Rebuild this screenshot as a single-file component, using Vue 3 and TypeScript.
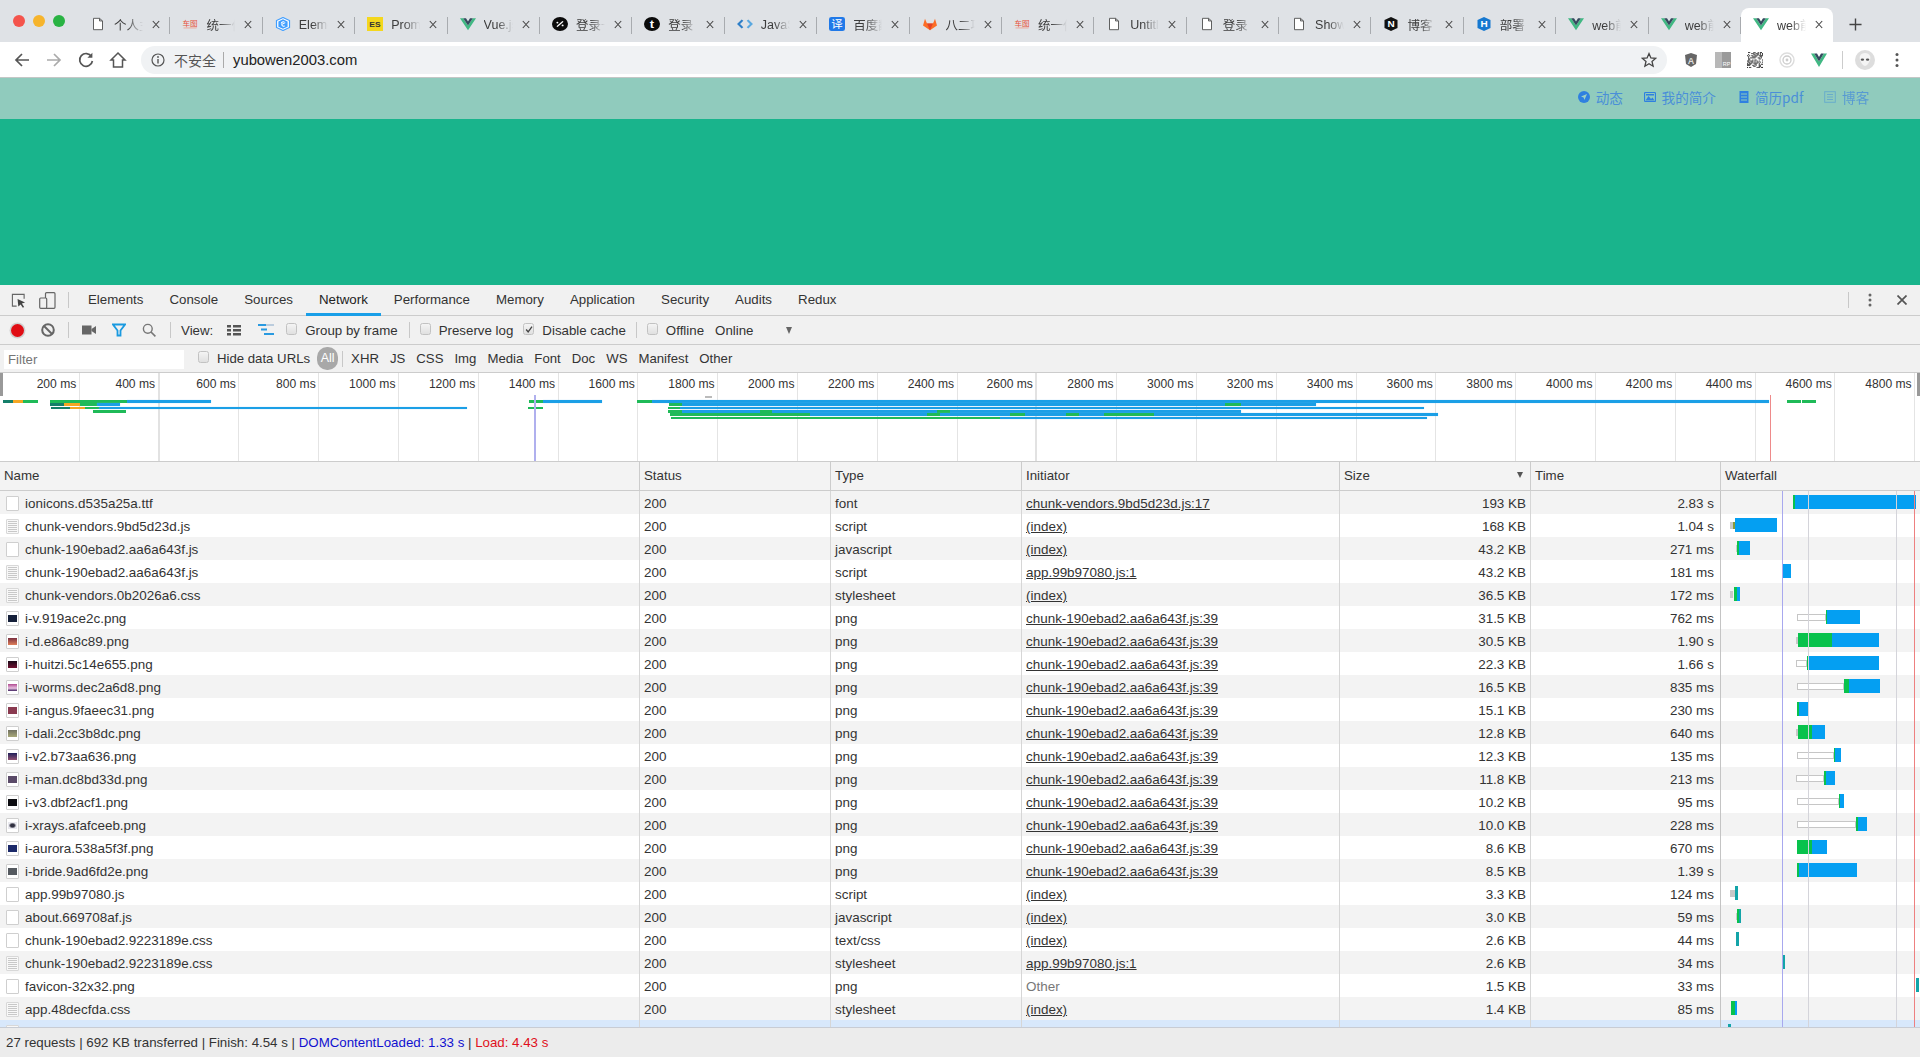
<script setup lang="ts">
type Seg = [string, number, number]
interface Tab { fav: string; text: string; active?: boolean }
interface Row {
  name: string; type: string; init: string; size: string; time: string
  icon: string; thumb?: string; bars: Seg[]
}

const tabs: Tab[] = [
  { fav: 'file', text: '个人主页' }, { fav: 'red', text: '统一任务' }, { fav: 'el', text: 'Element' },
  { fav: 'es', text: 'Promise' }, { fav: 'vue', text: 'Vue.js' }, { fav: 'noon', text: '登录一下' },
  { fav: 't', text: '登录  ' }, { fav: 'js', text: 'JavaScript' }, { fav: 'fy', text: '百度翻译' },
  { fav: 'gl', text: '八二项目' }, { fav: 'red', text: '统一任务' }, { fav: 'file', text: 'Untitled' },
  { fav: 'file', text: '登录  ' }, { fav: 'file', text: 'Show' }, { fav: 'n', text: '博客  ' },
  { fav: 'h', text: '部署  ' }, { fav: 'vue', text: 'web前端' }, { fav: 'vue', text: 'web前端' },
  { fav: 'vue', text: 'web前端', active: true },
]

const devTabs = ['Elements', 'Console', 'Sources', 'Network', 'Performance', 'Memory', 'Application', 'Security', 'Audits', 'Redux']
const filters = ['XHR', 'JS', 'CSS', 'Img', 'Media', 'Font', 'Doc', 'WS', 'Manifest', 'Other']
const ticks = Array.from({ length: 24 }, (_, i) => `${(i + 1) * 200} ms`)

const ovBars: [number, string, number, number][] = [
  [400, 'g', 23, 38], [400, 'd', 2.5, 12.5], [400, 'o', 12.5, 23],
  [400, 'b', 127, 211], [400, 'g', 49.5, 127], [400, 'b', 543, 602], [400, 'g', 529, 543],
  [400, 'b', 652, 1769], [400, 'g', 637, 652], [400, 'g', 1787, 1801], [400, 'g', 1802, 1816],
  [403.3, 'd', 49.5, 64], [403.3, 'o', 64, 80], [403.3, 'g', 80, 97], [403.3, 'b', 97, 120],
  [403.3, 'b', 682, 1316], [403.3, 'g', 669, 682], [403.3, 'g', 1225, 1241],
  [406.7, 'd', 51, 70], [406.7, 'o', 70, 85], [406.7, 'g', 85, 99], [406.7, 'b', 99, 467],
  [406.7, 'g', 528, 543], [406.7, 'b', 680, 1424], [406.7, 'g', 668, 680],
  [410, 'g', 93, 126], [410, 'b', 682, 1241], [410, 'g', 668, 682], [410, 'g', 760, 772], [410, 'g', 937, 950],
  [413.3, 'b', 810, 1438], [413.3, 'g', 670, 810], [413.3, 'g', 927, 940], [413.3, 'g', 1010, 1025],
  [413.3, 'g', 1066, 1079], [413.3, 'g', 1104, 1154],
  [416.7, 'b', 1000, 1427], [416.7, 'g', 671, 1000],
]

const c = 'chunk-190ebad2.aa6a643f.js:39'
const rows: Row[] = [
  { name: 'ionicons.d535a25a.ttf', type: 'font', init: 'chunk-vendors.9bd5d23d.js:17', size: '193 KB', time: '2.83 s', icon: 'blank', bars: [['gr', 340, 345], ['bl', 345, 707]] },
  { name: 'chunk-vendors.9bd5d23d.js', type: 'script', init: '(index)', size: '168 KB', time: '1.04 s', icon: 'code', bars: [['wh', 150, 160], ['ol', 160, 165], ['bl', 165, 291]] },
  { name: 'chunk-190ebad2.aa6a643f.js', type: 'javascript', init: '(index)', size: '43.2 KB', time: '271 ms', icon: 'blank', bars: [['wh', 167, 172], ['gr', 172, 176], ['bl', 176, 209]] },
  { name: 'chunk-190ebad2.aa6a643f.js', type: 'script', init: 'app.99b97080.js:1', size: '43.2 KB', time: '181 ms', icon: 'code', bars: [['bl', 307, 334]] },
  { name: 'chunk-vendors.0b2026a6.css', type: 'stylesheet', init: '(index)', size: '36.5 KB', time: '172 ms', icon: 'code', bars: [['wh', 150, 160], ['gr', 163, 170], ['bl', 170, 179]] },
  { name: 'i-v.919ace2c.png', type: 'png', init: c, size: '31.5 KB', time: '762 ms', icon: 'png', thumb: '#15203a', bars: [['wt', 352, 437], ['gr', 437, 442], ['bl', 442, 539]] },
  { name: 'i-d.e86a8c89.png', type: 'png', init: c, size: '30.5 KB', time: '1.90 s', icon: 'png', thumb: 'linear-gradient(#7a3040,#e0805a)', bars: [['wh', 348, 354], ['gr', 354, 456], ['bl', 456, 598]] },
  { name: 'i-huitzi.5c14e655.png', type: 'png', init: c, size: '22.3 KB', time: '1.66 s', icon: 'png', thumb: 'linear-gradient(#1a0a18,#701030)', bars: [['wt', 348, 380], ['gr', 380, 383], ['bl', 383, 598]] },
  { name: 'i-worms.dec2a6d8.png', type: 'png', init: c, size: '16.5 KB', time: '835 ms', icon: 'png', thumb: 'linear-gradient(#b04a90,#e8c0e0 60%,#402060)', bars: [['wt', 352, 492], ['gr', 492, 507], ['bl', 507, 601]] },
  { name: 'i-angus.9faeec31.png', type: 'png', init: c, size: '15.1 KB', time: '230 ms', icon: 'png', thumb: '#8a3a50', bars: [['gr', 351, 356], ['bl', 356, 384]] },
  { name: 'i-dali.2cc3b8dc.png', type: 'png', init: c, size: '12.8 KB', time: '640 ms', icon: 'png', thumb: 'linear-gradient(#707060,#a8a878)', bars: [['wh', 348, 354], ['gr', 354, 397], ['bl', 397, 436]] },
  { name: 'i-v2.b73aa636.png', type: 'png', init: c, size: '12.3 KB', time: '135 ms', icon: 'png', thumb: 'linear-gradient(#20205a,#905070)', bars: [['wt', 352, 463], ['gr', 463, 465], ['bl', 465, 483]] },
  { name: 'i-man.dc8bd33d.png', type: 'png', init: c, size: '11.8 KB', time: '213 ms', icon: 'png', thumb: '#5a4a68', bars: [['wt', 349, 433], ['gr', 433, 438], ['bl', 438, 466]] },
  { name: 'i-v3.dbf2acf1.png', type: 'png', init: c, size: '10.2 KB', time: '95 ms', icon: 'png', thumb: '#0c0c10', bars: [['wt', 352, 478], ['gr', 478, 481], ['bl', 481, 492]] },
  { name: 'i-xrays.afafceeb.png', type: 'png', init: c, size: '10.0 KB', time: '228 ms', icon: 'png', thumb: 'radial-gradient(#303040 30%,#e8e8ee 60%)', bars: [['wt', 352, 529], ['gr', 529, 534], ['bl', 534, 562]] },
  { name: 'i-aurora.538a5f3f.png', type: 'png', init: c, size: '8.6 KB', time: '670 ms', icon: 'png', thumb: '#1c2a6a', bars: [['gr', 351, 397], ['bl', 397, 440]] },
  { name: 'i-bride.9ad6fd2e.png', type: 'png', init: c, size: '8.5 KB', time: '1.39 s', icon: 'png', thumb: '#555a60', bars: [['gr', 351, 356], ['bl', 356, 532]] },
  { name: 'app.99b97080.js', type: 'script', init: '(index)', size: '3.3 KB', time: '124 ms', icon: 'blank', bars: [['wh', 150, 165], ['te', 165, 174]] },
  { name: 'about.669708af.js', type: 'javascript', init: '(index)', size: '3.0 KB', time: '59 ms', icon: 'blank', bars: [['wh', 167, 172], ['gr', 172, 176], ['te', 176, 182]] },
  { name: 'chunk-190ebad2.9223189e.css', type: 'text/css', init: '(index)', size: '2.6 KB', time: '44 ms', icon: 'blank', bars: [['te', 168, 177]] },
  { name: 'chunk-190ebad2.9223189e.css', type: 'stylesheet', init: 'app.99b97080.js:1', size: '2.6 KB', time: '34 ms', icon: 'code', bars: [['te', 307, 315]] },
  { name: 'favicon-32x32.png', type: 'png', init: 'Other', size: '1.5 KB', time: '33 ms', icon: 'blank', bars: [['te', 709, 717]] },
  { name: 'app.48decfda.css', type: 'stylesheet', init: '(index)', size: '1.4 KB', time: '85 ms', icon: 'code', bars: [['gr', 153, 165], ['bl', 165, 170]] },
  { name: '', type: '', init: '', size: '', time: '', icon: 'code', bars: [['te', 145, 152]] },
]

const wfLines = [
  { x: 1782, k: 'dcl' }, { x: 1808, k: 'grid' }, { x: 1896, k: 'grid' }, { x: 1914, k: 'load' },
]

const qr: [number, number][] = []
let seed = 7
for (let y = 0; y < 15; y++) {
  for (let x = 0; x < 15; x++) {
    seed = (seed * 73 + 41) % 101
    if (seed % 2 === 0) qr.push([x, y])
  }
}

const segStyle = (s: Seg) => ({ left: `${(s[1] - 123) / 3}px`, width: `${(s[2] - s[1]) / 3}px` })
const ovStyle = (b: [number, string, number, number]) => ({ top: `${b[0] - 373}px`, left: `${b[2]}px`, width: `${b[3] - b[2]}px` })
</script>

<template>
  <div class="page">
    <!-- tab strip -->
    <div class="strip">
      <div class="lights">
        <span class="light red"></span><span class="light yellow"></span><span class="light green"></span>
      </div>
      <div v-for="(t, i) in tabs" :key="i" class="tab" :class="{ active: t.active }">
        <svg class="fav" viewBox="0 0 16 16" preserveAspectRatio="none">
          <template v-if="t.fav === 'file'">
            <path d="M3.5 1.5h6l3 3v10h-9z M9.5 1.5v3h3" fill="#fff" stroke="#555" stroke-width="1" />
          </template>
          <template v-else-if="t.fav === 'red'">
            <text x="8" y="10" text-anchor="middle" font-size="7.6" fill="#e8503a" class="ft">车图</text>
            <rect x="1.5" y="12" width="13" height="1" fill="#f0a090" />
          </template>
          <template v-else-if="t.fav === 'el'">
            <polygon points="8,0.5 14.5,4 14.5,12 8,15.5 1.5,12 1.5,4" fill="#fff" stroke="#409eff" stroke-width="1.2" />
            <polygon points="8,2.5 12.6,5 12.6,11 8,13.5 3.4,11 3.4,5" fill="#409eff" />
            <path d="M10.3 6.4 L6.8 8.4 A1.9 1.9 0 0 0 10 10 M6.2 7.4 A2.4 2.4 0 0 1 9.4 5.6" fill="none" stroke="#fff" stroke-width="1.1" />
          </template>
          <template v-else-if="t.fav === 'es'">
            <rect width="16" height="16" fill="#f4d71e" />
            <text x="8" y="12" text-anchor="middle" font-size="8.5" font-weight="700" fill="#333" class="ft">ES</text>
          </template>
          <template v-else-if="t.fav === 'vue'">
            <path d="M0 1.5 L8 15 L16 1.5 H12.8 L8 9.6 L3.2 1.5z" fill="#41b883" />
            <path d="M3.2 1.5 L8 9.6 L12.8 1.5 H10 L8 5 L6 1.5z" fill="#35495e" />
          </template>
          <template v-else-if="t.fav === 'noon'">
            <circle cx="8" cy="8" r="8" fill="#0b0b0b" />
            <path d="M5 11 L11 5" stroke="#fff" stroke-width="1.6" />
            <circle cx="5.4" cy="6.4" r="1" fill="#fff" /><circle cx="10.6" cy="9.6" r="1" fill="#fff" />
          </template>
          <template v-else-if="t.fav === 't'">
            <circle cx="8" cy="8" r="8" fill="#0b0b0b" />
            <text x="8" y="13" text-anchor="middle" font-size="13" font-weight="700" fill="#fff" class="ft">t</text>
          </template>
          <template v-else-if="t.fav === 'js'">
            <path d="M5.5 3.5 L1.5 8 L5.5 12.5" fill="none" stroke="#2f7fc8" stroke-width="2.2" />
            <path d="M10.5 3.5 L14.5 8 L10.5 12.5" fill="none" stroke="#5aa8e0" stroke-width="2.2" />
          </template>
          <template v-else-if="t.fav === 'fy'">
            <rect width="16" height="16" rx="2.5" fill="#2079e8" />
            <text x="8" y="12.6" text-anchor="middle" font-size="11.5" fill="#fff" class="ft">译</text>
          </template>
          <template v-else-if="t.fav === 'gl'">
            <path d="M8 15 L1 9.6 L3 2 L5 7.5 H11 L13 2 L15 9.6z" fill="#fc6d26" />
            <path d="M8 15 L5 7.5 H11z" fill="#e24329" />
          </template>
          <template v-else-if="t.fav === 'n'">
            <polygon points="8,0 14.5,3.5 14.5,12.5 8,16 1.5,12.5 1.5,3.5" fill="#111" />
            <text x="8" y="12" text-anchor="middle" font-size="10" font-weight="700" fill="#fff" class="ft">N</text>
          </template>
          <template v-else-if="t.fav === 'h'">
            <polygon points="8,0 14.5,3.5 14.5,12.5 8,16 1.5,12.5 1.5,3.5" fill="#1678d0" />
            <text x="8" y="12" text-anchor="middle" font-size="10" font-weight="700" fill="#fff" class="ft">H</text>
          </template>
        </svg>
        <span class="tab-text">{{ t.text }}</span>
        <svg class="tab-x" viewBox="0 0 8 9"><path d="M0.8 1 L7.2 8 M7.2 1 L0.8 8" stroke="#444" stroke-width="1.1" fill="none" /></svg>
      </div>
      <svg class="plus" viewBox="0 0 14 14"><path d="M7 0.5v13M0.5 7h13" stroke="#444" stroke-width="1.5" /></svg>
    </div>

    <!-- address bar -->
    <div class="bar">
      <svg class="nav-ic" viewBox="0 0 18 18"><path d="M16 9H3 M9 3 L3 9 L9 15" fill="none" stroke="#555" stroke-width="1.7" /></svg>
      <svg class="nav-ic" viewBox="0 0 18 18"><path d="M2 9H15 M9 3 L15 9 L9 15" fill="none" stroke="#aaa" stroke-width="1.7" /></svg>
      <svg class="nav-ic" viewBox="0 0 18 18"><path d="M14.5 5.5 A6.4 6.4 0 1 0 15.4 10" fill="none" stroke="#555" stroke-width="1.7" /><path d="M15.4 1.8v5h-5z" fill="#555" /></svg>
      <svg class="nav-ic" viewBox="0 0 18 18"><path d="M9 2 L16 9 H13.5 V16 H4.5 V9 H2z" fill="none" stroke="#555" stroke-width="1.5" /></svg>
      <div class="omni">
        <svg class="info" viewBox="0 0 14 14"><circle cx="7" cy="7" r="6" fill="none" stroke="#555" stroke-width="1.2" /><path d="M7 6v4.4" stroke="#555" stroke-width="1.4" /><circle cx="7" cy="4" r=".9" fill="#555" /></svg>
        <span class="insecure">不安全</span>
        <span class="omni-sep"></span>
        <span class="url">yubowen2003.com</span>
        <svg class="star" viewBox="0 0 16 16"><path d="M8 1.6 L9.9 6 L14.6 6.4 L11 9.5 L12.1 14.2 L8 11.7 L3.9 14.2 L5 9.5 L1.4 6.4 L6.1 6z" fill="none" stroke="#444" stroke-width="1.3" /></svg>
      </div>
      <div class="ext">
        <svg class="ext-ic" viewBox="0 0 16 16"><polygon points="8,1 14,3 13,12 8,15 3,12 2,3" fill="#666" /><text x="8" y="11.5" text-anchor="middle" font-size="9" font-weight="700" fill="#ddd" class="ft">A</text></svg>
        <svg class="ext-ic m16" viewBox="0 0 16 16"><rect width="16" height="16" fill="#b8b8b8" /><rect x="7" width="9" height="16" fill="#9a9a9a" /><text x="11.5" y="14" text-anchor="middle" font-size="5.5" fill="#fff" class="ft">RP</text></svg>
        <svg class="ext-ic m16" viewBox="0 0 15 15"><rect v-for="(p, i) in qr" :key="i" :x="p[0]" :y="p[1]" width="1" height="1" fill="#333" /></svg>
        <svg class="ext-ic m16" viewBox="0 0 16 16"><circle cx="8" cy="8" r="7" fill="none" stroke="#ddd" stroke-width="1.4" /><circle cx="8" cy="8" r="4" fill="none" stroke="#ccc" stroke-width="1.3" /><circle cx="8" cy="8" r="1.4" fill="#ccc" /></svg>
        <svg class="ext-ic m16" viewBox="0 0 16 16"><path d="M0 1.5 L8 15 L16 1.5 H12.8 L8 9.6 L3.2 1.5z" fill="#41b883" /><path d="M3.2 1.5 L8 9.6 L12.8 1.5 H10 L8 5 L6 1.5z" fill="#35495e" /></svg>
        <span class="ext-sep"></span>
        <svg class="avatar" viewBox="0 0 20 20"><circle cx="10" cy="10" r="10" fill="#ddd" /><path d="M10 3 C15 3 16 7 15 10 C14 13 11.5 16 10 16 C8.5 16 6 13 5 10 C4 7 5 3 10 3z" fill="#f4f4f4" /><ellipse cx="7.4" cy="9.6" rx="1.7" ry="1.2" fill="#555" /><ellipse cx="12.6" cy="9.6" rx="1.7" ry="1.2" fill="#555" /></svg>
        <svg class="dots" viewBox="0 0 4 16"><circle cx="2" cy="2.5" r="1.5" fill="#555" /><circle cx="2" cy="8" r="1.5" fill="#555" /><circle cx="2" cy="13.5" r="1.5" fill="#555" /></svg>
      </div>
    </div>

    <!-- page -->
    <div class="hero-nav">
      <a class="hn hn1">
        <svg class="hn-ic" viewBox="0 0 12 12"><circle cx="6" cy="6" r="6" fill="#2f80e0" /><path d="M9 3 L6.4 9 L5.6 6.4 L3 5.6z" fill="#9fd0c4" /></svg>
        <span>动态</span>
      </a>
      <a class="hn hn2">
        <svg class="hn-ic" viewBox="0 0 12 12"><rect x="0.5" y="1.5" width="11" height="9" rx="1" fill="none" stroke="#2f80e0" stroke-width="1.2" /><path d="M1.5 9.5 L4.5 5 L7 8 L8.5 6.5 L10.5 9.5z M2 3h8v1.4H2z" fill="#2f80e0" /></svg>
        <span>我的简介</span>
      </a>
      <a class="hn hn3">
        <svg class="hn-ic" viewBox="0 0 12 12"><path d="M1.5 0h9v12h-9z" fill="#2f80e0" /><path d="M3 3h6M3 6h6M3 9h6" stroke="#90cbbd" stroke-width="1" /></svg>
        <span>简历pdf</span>
      </a>
      <a class="hn hn4">
        <svg class="hn-ic" viewBox="0 0 12 12"><rect x="0.7" y="0.7" width="10.6" height="10.6" fill="none" stroke="#2f80e0" stroke-width="1" /><path d="M3 3.5h6M3 6h6M3 8.5h6" stroke="#2f80e0" stroke-width="1" /></svg>
        <span>博客</span>
      </a>
    </div>
    <div class="hero"></div>

    <!-- devtools -->
    <div class="dt">
      <div class="dt-tabs">
        <svg class="ic-inspect" viewBox="0 0 16 16"><path d="M6 14H1.5V1.5H14V6" fill="none" stroke="#666" stroke-width="1.2" /><path d="M7 6.5 L15 10 L11.6 11.3 L14 15 L12.6 15.8 L10.3 12.2 L7.8 14.5z" fill="#444" /></svg>
        <svg class="ic-device" viewBox="0 0 17 17"><rect x="6.5" y="0.7" width="9.5" height="15.6" rx="1" fill="none" stroke="#666" stroke-width="1.2" /><rect x="0.7" y="6" width="7" height="10.3" rx="1" fill="#f1f1f1" stroke="#666" stroke-width="1.2" /></svg>
        <span class="vsep tabs-sep"></span>
        <span v-for="t in devTabs" :key="t" class="dt-tab" :class="{ on: t === 'Network' }">{{ t }}</span>
        <span class="spacer"></span>
        <span class="vsep"></span>
        <svg class="ic-dots" viewBox="0 0 4 14"><circle cx="2" cy="2" r="1.5" fill="#666" /><circle cx="2" cy="7" r="1.5" fill="#666" /><circle cx="2" cy="12" r="1.5" fill="#666" /></svg>
        <svg class="ic-close" viewBox="0 0 10 10"><path d="M0.5 0.5 L9.5 9.5 M9.5 0.5 L0.5 9.5" stroke="#555" stroke-width="1.7" /></svg>
      </div>

      <div class="dt-tools">
        <span class="rec"></span>
        <svg class="tic ml17" viewBox="0 0 14 14"><circle cx="7" cy="7" r="5.8" fill="none" stroke="#666" stroke-width="2" /><path d="M3 3 L11 11" stroke="#666" stroke-width="2" /></svg>
        <span class="vsep ml13"></span>
        <svg class="tic-w ml12" viewBox="0 0 16 14"><rect x="1" y="2.5" width="9.5" height="9" fill="#666" /><path d="M10.5 6 L15 3 V11 L10.5 8z" fill="#666" /></svg>
        <svg class="tic ml15" viewBox="0 0 14 14"><path d="M1 1.5 H13 L8.5 7.5 V12.5 L5.5 12.5 V7.5z" fill="none" stroke="#1a9ae0" stroke-width="1.8" /></svg>
        <svg class="tic ml16" viewBox="0 0 14 14"><circle cx="5.8" cy="5.8" r="4.4" fill="none" stroke="#777" stroke-width="1.4" /><path d="M9 9 L13.4 13.4" stroke="#777" stroke-width="1.6" /></svg>
        <span class="vsep ml14"></span>
        <span class="ml10">View:</span>
        <svg class="tic ml14" viewBox="0 0 14 14"><path d="M0 2h4v2.4H0z M6 2h8v2.4H6z M0 6h4v2.4H0z M6 6h8v2.4H6z M0 10h4v2.4H0z M6 10h8v2.4H6z" fill="#555" /></svg>
        <svg class="tic-w ml17" viewBox="0 0 16 14"><path d="M0 1h8v2H0z M3 5.5h6v2H3z M6 10h10v2H6z" fill="#2a9ae0" /><path d="M8 1h8v2H8z" fill="#bcd" /></svg>
        <span class="cb ml12"></span><span class="ml8">Group by frame</span>
        <span class="vsep ml11"></span>
        <span class="cb ml10"></span><span class="ml8">Preserve log</span>
        <span class="cb on ml10"><svg viewBox="0 0 12 12"><path d="M2.6 6 L5 9 L9.6 2.6" fill="none" stroke="#444" stroke-width="1.6" /></svg></span><span class="ml8">Disable cache</span>
        <span class="vsep ml10"></span>
        <span class="cb ml10"></span><span class="ml8">Offline</span>
        <span class="ml11">Online</span>
        <span class="tri ml32"></span>
      </div>

      <div class="dt-filter">
        <span class="filter-input">Filter</span>
        <span class="cb ml14"></span><span class="ml8">Hide data URLs</span>
        <span class="pill">All</span>
        <span class="vsep short"></span>
        <span v-for="f in filters" :key="f" class="fl">{{ f }}</span>
      </div>

      <div class="ov">
        <div v-for="(t, i) in ticks" :key="t" class="tick" :class="{ heavy: i === 1 || i === 12 }">{{ t }}</div>
        <span class="handle left"></span>
        <span class="handle right"></span>
        <span class="dash"></span>
        <span v-for="(b, i) in ovBars" :key="i" class="ob" :class="b[1]" :style="ovStyle(b)"></span>
        <span class="ov-dcl"></span>
        <span class="ov-load"></span>
      </div>

      <div class="thead">
        <div class="th"><span>Name</span></div>
        <div class="th"><span>Status</span></div>
        <div class="th"><span>Type</span></div>
        <div class="th"><span>Initiator</span></div>
        <div class="th sort"><span>Size</span><span class="sort-tri"></span></div>
        <div class="th"><span>Time</span></div>
        <div class="th last"><span>Waterfall</span></div>
      </div>

      <div class="tbody">
        <div v-for="(r, i) in rows" :key="i" class="tr" :class="{ sel: i === 23 }">
          <div class="td name">
            <span class="ficon" :class="r.icon">
              <i v-if="r.icon === 'png'" class="thumb" :style="{ background: r.thumb }"></i>
              <i v-if="r.icon === 'code'" class="codelines"></i>
            </span>
            <span class="fname">{{ r.name }}</span>
          </div>
          <div class="td">{{ r.name ? '200' : '' }}</div>
          <div class="td">{{ r.type }}</div>
          <div class="td"><span :class="r.init === 'Other' ? 'other' : 'link'">{{ r.init }}</span></div>
          <div class="td right">{{ r.size }}</div>
          <div class="td right time">{{ r.time }}</div>
          <div class="td wf">
            <span v-for="(s, j) in r.bars" :key="j" class="seg" :class="s[0]" :style="segStyle(s)"></span>
          </div>
        </div>
        <span v-for="l in wfLines" :key="l.x" class="wf-line" :class="l.k" :style="{ left: `${l.x}px` }"></span>
      </div>

      <div class="foot">
        <span>27 requests | 692 KB transferred | Finish: 4.54 s | </span>
        <span class="blue">DOMContentLoaded: 1.33 s</span>
        <span>&nbsp;| </span>
        <span class="redt">Load: 4.43 s</span>
      </div>
    </div>
  </div>
</template>

<style scoped>
.page {
  width: 1920px;
  height: 1057px;
  overflow: hidden;
  display: flex;
  flex-direction: column;
  font-family: "Liberation Sans", "Noto Sans CJK SC", sans-serif;
  font-size: 13.3px;
  color: #333;
}
.ft { font-family: "Liberation Sans", "Noto Sans CJK SC", sans-serif; }

/* tab strip */
.strip { height: 42px; flex: none; background: #dfe2e6; display: flex; align-items: flex-end; position: relative; padding-left: 78px; box-sizing: border-box; }
.lights { position: absolute; left: 13px; top: 15px; display: flex; gap: 8px; }
.light { width: 12px; height: 12px; border-radius: 50%; }
.light.red { background: #f4544c; }
.light.yellow { background: #f6b42c; }
.light.green { background: #29b343; }
.tab { width: 92.4px; flex: none; height: 34px; box-sizing: border-box; display: flex; align-items: center; padding: 0 10px 1px 12px; position: relative; }
.tab::after { content: ""; position: absolute; right: 0; top: 9px; height: 17px; width: 1px; background: #a8abaf; }
.tab.active { background: #fff; border-radius: 8px 8px 0 0; }
.tab.active::after { display: none; }
.fav { width: 16px; height: 14px; flex: none; margin-top: -1px; }
.tab-text { width: 29px; margin-left: 8px; flex: none; white-space: nowrap; overflow: hidden; font-size: 12.5px; color: #3c3c3c; -webkit-mask-image: linear-gradient(to right, #000 45%, transparent 100%); mask-image: linear-gradient(to right, #000 45%, transparent 100%); }
.tab-x { width: 8px; height: 9px; flex: none; margin-left: 9px; }
.plus { width: 13px; height: 13px; flex: none; margin: 0 0 11px 16px; }

/* address bar */
.bar { height: 36px; flex: none; background: #fff; display: flex; align-items: center; box-sizing: border-box; border-bottom: 1px solid #c4c7c6; padding-left: 13px; }
.nav-ic { width: 18px; height: 18px; flex: none; margin-right: 14px; }
.omni { width: 1526px; height: 28px; flex: none; box-sizing: border-box; background: #f0f2f4; border-radius: 14px; display: flex; align-items: center; padding: 0 10px 0 10px; }
.info { width: 14px; height: 14px; flex: none; }
.insecure { margin-left: 9px; font-size: 14px; color: #555; }
.omni-sep { width: 1px; height: 16px; background: #aaa; margin: 0 9px 0 7px; }
.url { font-size: 14.8px; color: #222; }
.star { width: 16px; height: 16px; margin-left: auto; flex: none; }
.ext { display: flex; align-items: center; margin-left: 16px; }
.ext-ic { width: 16px; height: 16px; flex: none; }
.m16 { margin-left: 16px; }
.ext-sep { width: 1px; height: 18px; background: #ccc; margin-left: 15px; }
.avatar { width: 20px; height: 20px; flex: none; margin-left: 12px; }
.dots { width: 4px; height: 16px; flex: none; margin-left: 20px; }

/* page */
.hero-nav { height: 41px; flex: none; background: #90cbbd; display: flex; align-items: center; padding: 0 0 3px 1578px; box-sizing: border-box; }
.hn { display: flex; align-items: center; font-size: 13.6px; color: #4a8fd8; font-family: "Noto Sans CJK SC", "Liberation Sans", sans-serif; }
.hn-ic { width: 12px; height: 12px; flex: none; margin-right: 5.7px; }
.hn2 { margin-left: 21px; }
.hn3 { margin-left: 22px; }
.hn3 .hn-ic { margin-right: 5px; }
.hn4 { margin-left: 21px; }
.hn4 .hn-ic { opacity: .4; }
.hn4 span { opacity: .8; }
.hero { height: 166px; flex: none; background: #19b48c; }

/* devtools */
.dt { flex: 1; min-height: 0; display: flex; flex-direction: column; background: #f1f1f1; }
.vsep { width: 1px; height: 16px; background: #c8c8c8; flex: none; }
.dt-tabs { height: 31px; flex: none; box-sizing: border-box; border-bottom: 1px solid #ccc; display: flex; align-items: stretch; padding-left: 11px; }
.dt-tabs > svg, .dt-tabs > .vsep { align-self: center; }
.ic-inspect { width: 15px; height: 15px; flex: none; }
.ic-device { width: 17px; height: 17px; margin-left: 13px; flex: none; }
.tabs-sep { margin-left: 12px; margin-right: 6px; }
.dt-tab { padding: 0 13px; display: flex; align-items: center; box-sizing: border-box; border-bottom: 2px solid transparent; }
.dt-tab.on { border-bottom: 3px solid #1a9fe8; margin-bottom: -1px; color: #222; }
.spacer { flex: 1; }
.ic-dots { width: 4px; height: 14px; margin: 0 0 0 19px; flex: none; }
.ic-close { width: 10px; height: 10px; margin: 0 13px 0 25px; flex: none; }

.dt-tools { height: 29px; flex: none; box-sizing: border-box; border-bottom: 1px solid #ccc; display: flex; align-items: center; padding-left: 11px; font-size: 13.3px; }
.rec { width: 13px; height: 13px; border-radius: 50%; background: #e00d14; box-shadow: 0 0 0 1.5px #d0d0d0; flex: none; }
.tic { width: 14px; height: 14px; flex: none; }
.tic-w { width: 16px; height: 14px; flex: none; }
.ml8 { margin-left: 8px; } .ml10 { margin-left: 10px; } .ml11 { margin-left: 11px; }
.ml12 { margin-left: 12px; } .ml13 { margin-left: 13px; } .ml14 { margin-left: 14px; }
.ml15 { margin-left: 15px; } .ml16 { margin-left: 16px; } .ml17 { margin-left: 17px; }
.ml32 { margin-left: 32px; }
.cb { width: 11px; height: 12px; box-sizing: border-box; flex: none; border: 1px solid #c2c2c2; border-radius: 2.5px; background: linear-gradient(#f4f4f4, #e0e0e0); margin-top: -3px; }
.cb svg { display: block; width: 10px; height: 11px; }
.tri { width: 0; height: 0; border-left: 3.5px solid transparent; border-right: 3.5px solid transparent; border-top: 7px solid #666; }

.dt-filter { height: 28px; flex: none; box-sizing: border-box; border-bottom: 1px solid #ccc; display: flex; align-items: center; padding-left: 4px; font-size: 13.2px; }
.filter-input { width: 180px; height: 19px; flex: none; box-sizing: border-box; background: #fff; color: #757575; padding: 2px 4px 0; line-height: 16px; margin-top: 1px; }
.pill { width: 21px; height: 23px; margin-left: 7px; flex: none; border-radius: 10px; background: #a8a8a8; color: #fff; text-align: center; line-height: 23px; font-size: 12.5px; }
.short { margin: 0 8px 0 4px; }
.fl { margin-right: 11px; }

.ov { height: 89px; flex: none; box-sizing: border-box; background: #fff; border-bottom: 1px solid #ccc; display: flex; position: relative; font-size: 12.1px; }
.tick { flex: 0 0 79.8px; box-sizing: border-box; text-align: right; padding: 0 2.5px 0 0; border-right: 1px solid #e4e4e4; line-height: 22px; white-space: nowrap; }
.tick.heavy { border-right: 2px solid #e2e2e2; }
.handle { position: absolute; top: 0; width: 3px; height: 23px; background: #999; }
.handle.left { left: 0; }
.handle.right { right: 0; }
.dash { position: absolute; left: 705px; top: 23px; width: 7px; height: 1.5px; background: #bbb; }
.ob { position: absolute; height: 2.5px; }
.ob.b { background: #1b9fe6; box-shadow: 0 0 1px #7cc4f0; }
.ob.g { background: #1fba58; }
.ob.d { background: #157f6a; }
.ob.o { background: #f5a623; }
.ov-dcl { position: absolute; left: 533.5px; top: 22px; bottom: 0; width: 2px; background: #b0b0ee; }
.ov-load { position: absolute; left: 1770px; top: 22px; bottom: 0; width: 1px; background: #ee8a8a; }

.thead { height: 29px; flex: none; box-sizing: border-box; display: grid; grid-template-columns: 640px 191px 191px 318px 191px 190px 199px; border-bottom: 1px solid #ccc; background: #f3f3f3; }
.th { box-sizing: border-box; border-right: 1px solid #ccc; display: flex; align-items: center; padding: 0 4px 2px; }
.th.last { border-right: 0; }
.th.sort { justify-content: space-between; padding-right: 7px; }
.sort-tri { width: 0; height: 0; border-left: 3.5px solid transparent; border-right: 3.5px solid transparent; border-top: 6px solid #555; }

.tbody { flex: 1; min-height: 0; overflow: hidden; position: relative; background: #fff; }
.tr { display: grid; grid-template-columns: 640px 191px 191px 318px 191px 190px 199px; height: 23px; font-size: 13.45px; }
.tr:nth-child(odd) { background: #f3f3f3; }
.tr.sel { background: #d8e8fb; }
.td { box-sizing: border-box; border-right: 1px solid #d6d6d6; padding: 1px 4px 0; line-height: 23px; white-space: nowrap; overflow: hidden; color: #333; }
.td.right { text-align: right; }
.td.time { padding-right: 6px; border-right-color: #c4c4c4; }
.td.wf { border-right: 0; padding: 0; position: relative; overflow: visible; }
.td.name { display: flex; align-items: center; padding: 2px 0 0 6px; }
.fname { margin-left: 6px; letter-spacing: 0; }
.link { text-decoration: underline; }
.other { color: #777; }
.ficon { width: 13px; height: 15px; box-sizing: border-box; flex: none; border: 1px solid #cfcfcf; border-radius: 1px; background: #fff; display: flex; align-items: center; justify-content: center; }
.ficon.code { background: #f8f8f8; border-color: #d8d8d8; }
.thumb { display: block; width: 9px; height: 7px; }
.codelines { display: block; width: 9px; height: 11px; background: repeating-linear-gradient(#c8c8c8 0 1px, transparent 1px 2px); }
.seg { position: absolute; top: 4px; height: 14px; }
.seg.bl { background: #049ff2; }
.seg.gr { background: #08c24c; }
.seg.te { background: #13a4a8; }
.seg.ol { background: #8a9a38; top: 8px; height: 7px; }
.seg.wh { background: #c8c8c8; top: 8px; height: 7px; }
.seg.wt { background: #fff; border: 1px solid #c6c6c6; box-sizing: border-box; top: 8px; height: 7px; }
.wf-line { position: absolute; top: 0; bottom: 0; width: 1px; }
.wf-line.dcl { background: #a8a8ee; }
.wf-line.grid { background: #d4d4da; }
.wf-line.load { background: #ee8080; }

.foot { height: 30px; flex: none; box-sizing: border-box; background: #ececec; border-top: 1px solid #c8ccd4; display: flex; align-items: center; padding-left: 6px; white-space: pre; }
.blue { color: #1010d0; }
.redt { color: #e01020; }
</style>
